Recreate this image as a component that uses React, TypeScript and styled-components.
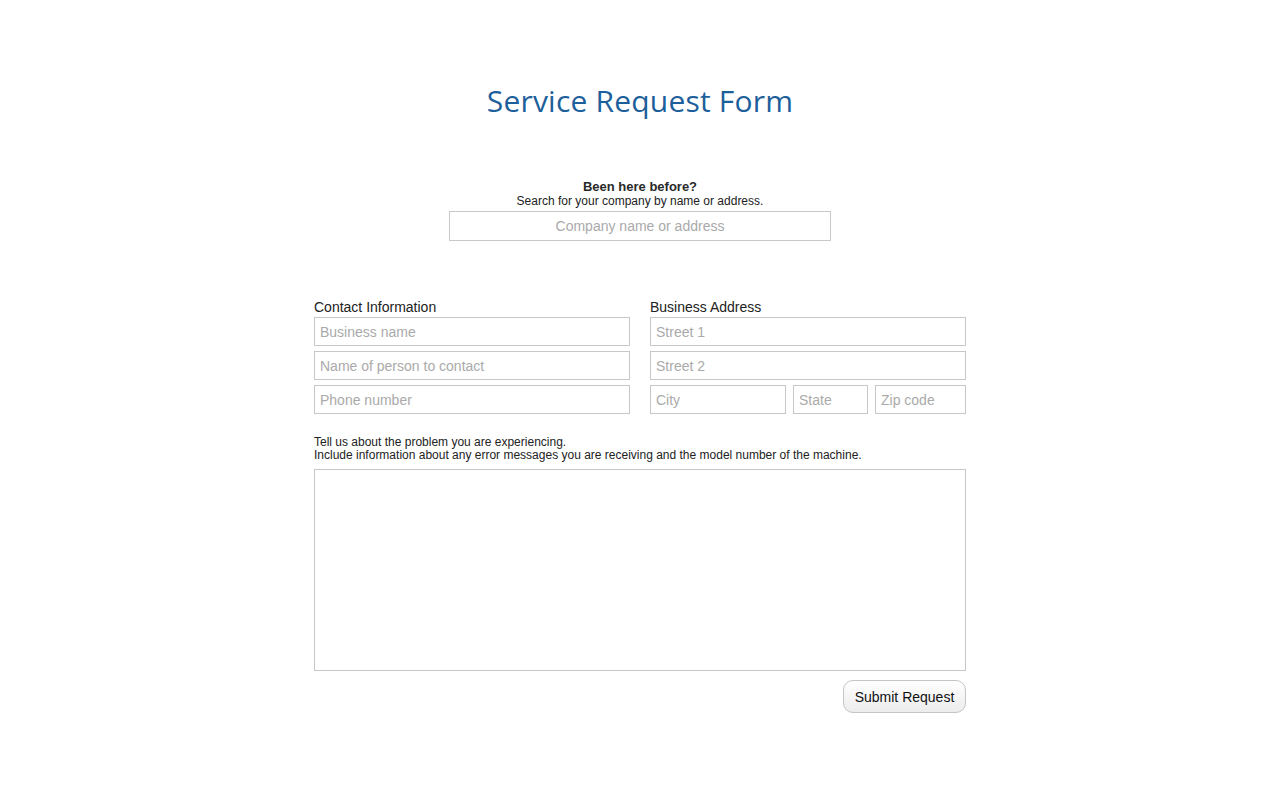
import styled, { createGlobalStyle } from "styled-components";

const GlobalStyle = createGlobalStyle`
  html, body {
    margin: 0;
    padding: 0;
    background: #fff;
  }
  body {
    font-family: "Liberation Sans", Arial, sans-serif;
    color: #222;
  }
`;

const Page = styled.main`
  width: 652px;
  margin: 0 auto;
  padding-top: 80px;
`;

const Title = styled.h1`
  margin: 0;
  text-align: center;
  font-family: "Open Sans", "DejaVu Sans", sans-serif;
  font-weight: 400;
  font-size: 30px;
  line-height: 42px;
  color: #1d5f9b;
  letter-spacing: 0.2px;
`;

const Lookup = styled.section`
  margin-top: 57px;
  display: flex;
  flex-direction: column;
  align-items: center;
  text-align: center;
`;

const LookupHeading = styled.strong`
  font-size: 13px;
  line-height: 16px;
  font-weight: 700;
  color: #2a2a2a;
`;

const SmallText = styled.p`
  margin: 0;
  font-size: 12px;
  line-height: 13px;
  color: #222;
`;

const Field = styled.input<{ $center?: boolean }>`
  box-sizing: border-box;
  display: block;
  width: 100%;
  height: 29px;
  margin: 0;
  padding: 0 5px;
  border: 1px solid #c8c8c8;
  border-radius: 0;
  font-family: "Liberation Sans", Arial, sans-serif;
  font-size: 14px;
  color: #222;
  outline: none;
  text-align: ${(p) => (p.$center ? "center" : "left")};
  &::placeholder {
    color: #aaa;
  }
`;

const SearchField = styled(Field)`
  width: 382px;
  height: 30px;
  margin-top: 3px;
`;

const Columns = styled.div`
  margin-top: 58px;
  display: grid;
  grid-template-columns: 1fr 1fr;
  column-gap: 20px;
`;

const Group = styled.fieldset`
  margin: 0;
  padding: 0;
  border: 0;
  min-width: 0;
  display: flex;
  flex-direction: column;
`;

const Legend = styled.legend`
  padding: 0;
  font-size: 14px;
  line-height: 16px;
  color: #222;
  margin-bottom: 2px;
`;

const FieldList = styled.div`
  display: flex;
  flex-direction: column;
  gap: 5px;
`;

const CityRow = styled.div`
  display: grid;
  grid-template-columns: 136px 75px 1fr;
  column-gap: 7px;
`;

const Problem = styled.section`
  margin-top: 22px;
`;

const TextArea = styled.textarea`
  box-sizing: border-box;
  display: block;
  width: 100%;
  height: 202px;
  margin-top: 7px;
  border: 1px solid #c8c8c8;
  border-radius: 0;
  resize: none;
  outline: none;
  padding: 5px;
  font-family: "Liberation Sans", Arial, sans-serif;
  font-size: 14px;
`;

const Actions = styled.div`
  display: flex;
  justify-content: flex-end;
  margin-top: 9px;
`;

const SubmitButton = styled.button`
  height: 33px;
  width: 123px;
  padding: 0 10px;
  border: 1px solid #c4c4c4;
  border-radius: 10px;
  background: linear-gradient(#ffffff, #ececec);
  font-family: "Liberation Sans", Arial, sans-serif;
  font-size: 14px;
  color: #111;
  cursor: pointer;
`;

export default function App() {
  return (
    <>
      <GlobalStyle />
      <Page>
        <Title>Service Request Form</Title>

        <Lookup>
          <LookupHeading>Been here before?</LookupHeading>
          <SmallText>Search for your company by name or address.</SmallText>
          <SearchField $center placeholder="Company name or address" />
        </Lookup>

        <Columns>
          <Group>
            <Legend>Contact Information</Legend>
            <FieldList>
              <Field placeholder="Business name" />
              <Field placeholder="Name of person to contact" />
              <Field placeholder="Phone number" />
            </FieldList>
          </Group>
          <Group>
            <Legend>Business Address</Legend>
            <FieldList>
              <Field placeholder="Street 1" />
              <Field placeholder="Street 2" />
              <CityRow>
                <Field placeholder="City" />
                <Field placeholder="State" />
                <Field placeholder="Zip code" />
              </CityRow>
            </FieldList>
          </Group>
        </Columns>

        <Problem>
          <SmallText>Tell us about the problem you are experiencing.</SmallText>
          <SmallText>
            Include information about any error messages you are receiving and the model number of the machine.
          </SmallText>
          <TextArea />
        </Problem>

        <Actions>
          <SubmitButton type="button">Submit Request</SubmitButton>
        </Actions>
      </Page>
    </>
  );
}
